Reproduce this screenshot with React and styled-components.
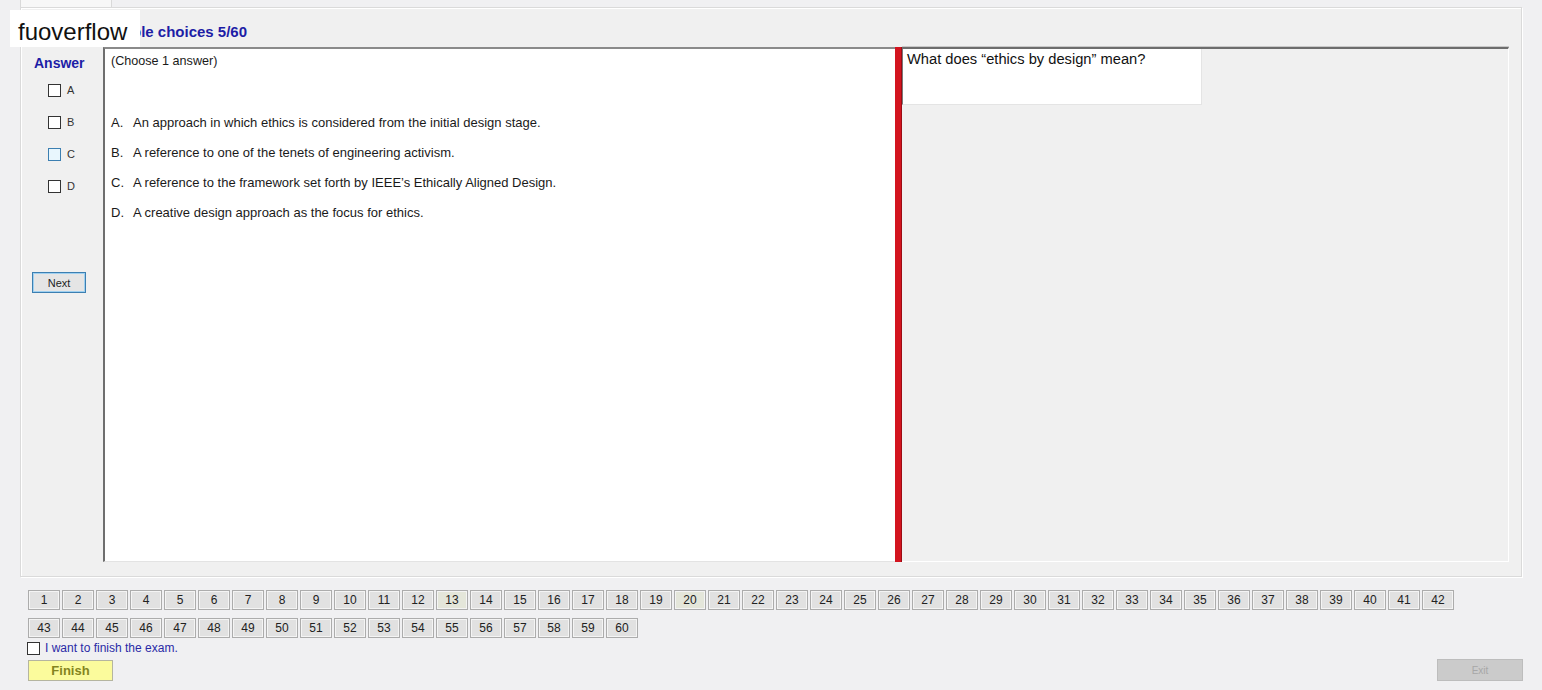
import React from "react"
import styled, { createGlobalStyle } from "styled-components"

const GlobalStyle = createGlobalStyle`
  html, body {
    margin: 0;
    padding: 0;
    background: #f0f0f0;
    font-family: "Liberation Sans", Arial, sans-serif;
  }
`

const Page = styled.div`
  position: relative;
  width: 1542px;
  height: 690px;
  display: flex;
  flex-direction: column;
  background: #f0f0f2;
  overflow: hidden;
`

const TabStrip = styled.div`
  height: 7px;
  display: flex;
  padding-left: 20px;
`
const Tab = styled.div`
  width: 90px;
  border-left: 1px solid #d9d9d9;
  border-right: 1px solid #d9d9d9;
  background: #f7f7f7;
`

const GroupBox = styled.div`
  margin: 0 20px 0 20px;
  height: 568px;
  border: 1px solid #dadada;
  box-shadow: inset 1px 1px 0 #ffffff, 1px 1px 0 #ffffff;
  background: #f0f0f0;
  display: flex;
  flex-direction: column;
`

const Title = styled.div`
  height: 39px;
  padding-left: 76px;
  display: flex;
  align-items: center;
  padding-top: 7px;
  box-sizing: border-box;
  font-size: 15px;
  font-weight: bold;
  color: #1d1da6;
`

const Body = styled.div`
  display: flex;
  height: 515px;
  margin-right: 12px;
`

const LeftCol = styled.div`
  width: 82px;
  display: flex;
  flex-direction: column;
  padding-top: 8px;
`
const AnswerLabel = styled.div`
  line-height: 16px;
  padding-left: 13px;
  font-size: 14px;
  font-weight: bold;
  color: #1d1da6;
`
const Choices = styled.div`
  margin-top: 3px;
  display: flex;
  flex-direction: column;
`
const ChoiceRow = styled.label`
  height: 32px;
  display: flex;
  align-items: center;
  gap: 6px;
  padding-left: 27px;
  font-size: 11px;
  color: #333;
`
const Box = styled.span`
  width: 11px;
  height: 11px;
  border: 1px solid ${({ $hover }) => ($hover ? "#3c7fb1" : "#333")};
  background: ${({ $hover }) => ($hover ? "#e8f6fd" : "#fff")};
  display: inline-block;
`
const NextButton = styled.button`
  margin: 70px 0 0 11px;
  width: 54px;
  height: 21px;
  padding: 0;
  border: 1px solid #3c7fb1;
  box-shadow: inset 0 0 0 1px #9fd0f0;
  background: #e5e5e5;
  font-family: "Liberation Sans", Arial, sans-serif;
  font-size: 11px;
  color: #222;
`

const ContentPanel = styled.div`
  width: 792px;
  box-sizing: border-box;
  background: #ffffff;
  border-left: 2px solid #6e6e6e;
  border-top: 2px solid #8a8a8a;
  border-bottom: 1px solid #e3e3e3;
  padding: 4px 0 0 6px;
  font-size: 13px;
  color: #1a1a1a;
`
const Hint = styled.div`
  line-height: 16px;
  font-size: 12.6px;
`
const Options = styled.div`
  margin-top: 38px;
  display: flex;
  flex-direction: column;
`
const Option = styled.div`
  height: 30px;
  display: flex;
  align-items: center;
`
const Letter = styled.span`
  width: 22px;
`

const RedBar = styled.div`
  width: 7px;
  background: #d3141f;
  border-right: 1px solid #9b0c14;
  box-sizing: border-box;
`

const RightPanel = styled.div`
  flex: 1;
  background: #f0f0f0;
  border-top: 2px solid #6d6d6d;
  border-right: 1px solid #ffffff;
  border-bottom: 1px solid #ffffff;
  box-shadow: 0 -1px 0 #c8c8c8;
`
const QuestionBox = styled.div`
  width: 300px;
  height: 56px;
  box-sizing: border-box;
  background: #ffffff;
  border-left: 1px solid #7a7a7a;
  border-bottom: 1px solid #e4e4e4;
  border-right: 1px solid #e4e4e4;
  padding: 2px 0 0 4px;
  font-size: 14.7px;
  color: #111;
`

const Footer = styled.div`
  display: flex;
  flex-direction: column;
  padding: 13px 19px 0 28px;
`
const NumberGrid = styled.div`
  display: flex;
  flex-wrap: wrap;
  gap: 8px 2px;
  width: 1430px;
`
const NumButton = styled.button`
  width: 32px;
  height: 20px;
  padding: 0;
  box-sizing: border-box;
  border: 1px solid #acacac;
  box-shadow: inset 0 0 0 1px #f4f4f4;
  background: ${({ $visited }) => ($visited ? "#e4e6da" : "#e1e1e1")};
  font-family: "Liberation Sans", Arial, sans-serif;
  font-size: 12px;
  color: #222;
`
const FinishCheck = styled.label`
  margin: 2px 0 0 -1px;
  display: flex;
  align-items: center;
  gap: 5px;
  height: 16px;
  font-size: 12px;
  color: #2a2aa6;
`
const BigBox = styled.span`
  width: 11px;
  height: 11px;
  border: 1px solid #333;
  background: #fff;
  display: inline-block;
`
const ActionRow = styled.div`
  margin-top: 4px;
  display: flex;
  justify-content: space-between;
  align-items: center;
`
const FinishButton = styled.button`
  width: 85px;
  height: 21px;
  padding: 0;
  border: 1px solid #b5b5a0;
  background: #fbfb9c;
  font-family: "Liberation Sans", Arial, sans-serif;
  font-size: 13px;
  font-weight: bold;
  color: #84841f;
`
const ExitButton = styled.button`
  width: 86px;
  height: 22px;
  margin-top: -1px;
  padding: 0;
  border: 1px solid #bdbdbd;
  background: #cbcbcb;
  font-family: "Liberation Sans", Arial, sans-serif;
  font-size: 10px;
  color: #a7a7a7;
`

const Watermark = styled.div`
  position: absolute;
  left: 10px;
  top: 10px;
  width: 130px;
  height: 37px;
  background: #ffffff;
  padding: 6px 0 0 8px;
  box-sizing: border-box;
  display: flex;
  align-items: center;
  font-size: 24px;
  color: #111;
`

const letters = ["A", "B", "C", "D"]
const options = [
  "An approach in which ethics is considered from the initial design stage.",
  "A reference to one of the tenets of engineering activism.",
  "A reference to the framework set forth by IEEE’s Ethically Aligned Design.",
  "A creative design approach as the focus for ethics.",
]
const visited = [13, 20]

export default function App() {
  return (
    <Page>
      <GlobalStyle />
      <TabStrip>
        <Tab />
      </TabStrip>
      <GroupBox>
        <Title>Multiple choices 5/60</Title>
        <Body>
          <LeftCol>
            <AnswerLabel>Answer</AnswerLabel>
            <Choices>
              {letters.map((l) => (
                <ChoiceRow key={l}>
                  <Box $hover={l === "C"} />
                  {l}
                </ChoiceRow>
              ))}
            </Choices>
            <NextButton>Next</NextButton>
          </LeftCol>
          <ContentPanel>
            <Hint>(Choose 1 answer)</Hint>
            <Options>
              {options.map((text, i) => (
                <Option key={i}>
                  <Letter>{letters[i]}.</Letter>
                  {text}
                </Option>
              ))}
            </Options>
          </ContentPanel>
          <RedBar />
          <RightPanel>
            <QuestionBox>What does “ethics by design” mean?</QuestionBox>
          </RightPanel>
        </Body>
      </GroupBox>
      <Footer>
        <NumberGrid>
          {Array.from({ length: 60 }, (_, i) => i + 1).map((n) => (
            <NumButton key={n} $visited={visited.includes(n)}>
              {n}
            </NumButton>
          ))}
        </NumberGrid>
        <FinishCheck>
          <BigBox />I want to finish the exam.
        </FinishCheck>
        <ActionRow>
          <FinishButton>Finish</FinishButton>
          <ExitButton>Exit</ExitButton>
        </ActionRow>
      </Footer>
      <Watermark>fuoverflow</Watermark>
    </Page>
  )
}
